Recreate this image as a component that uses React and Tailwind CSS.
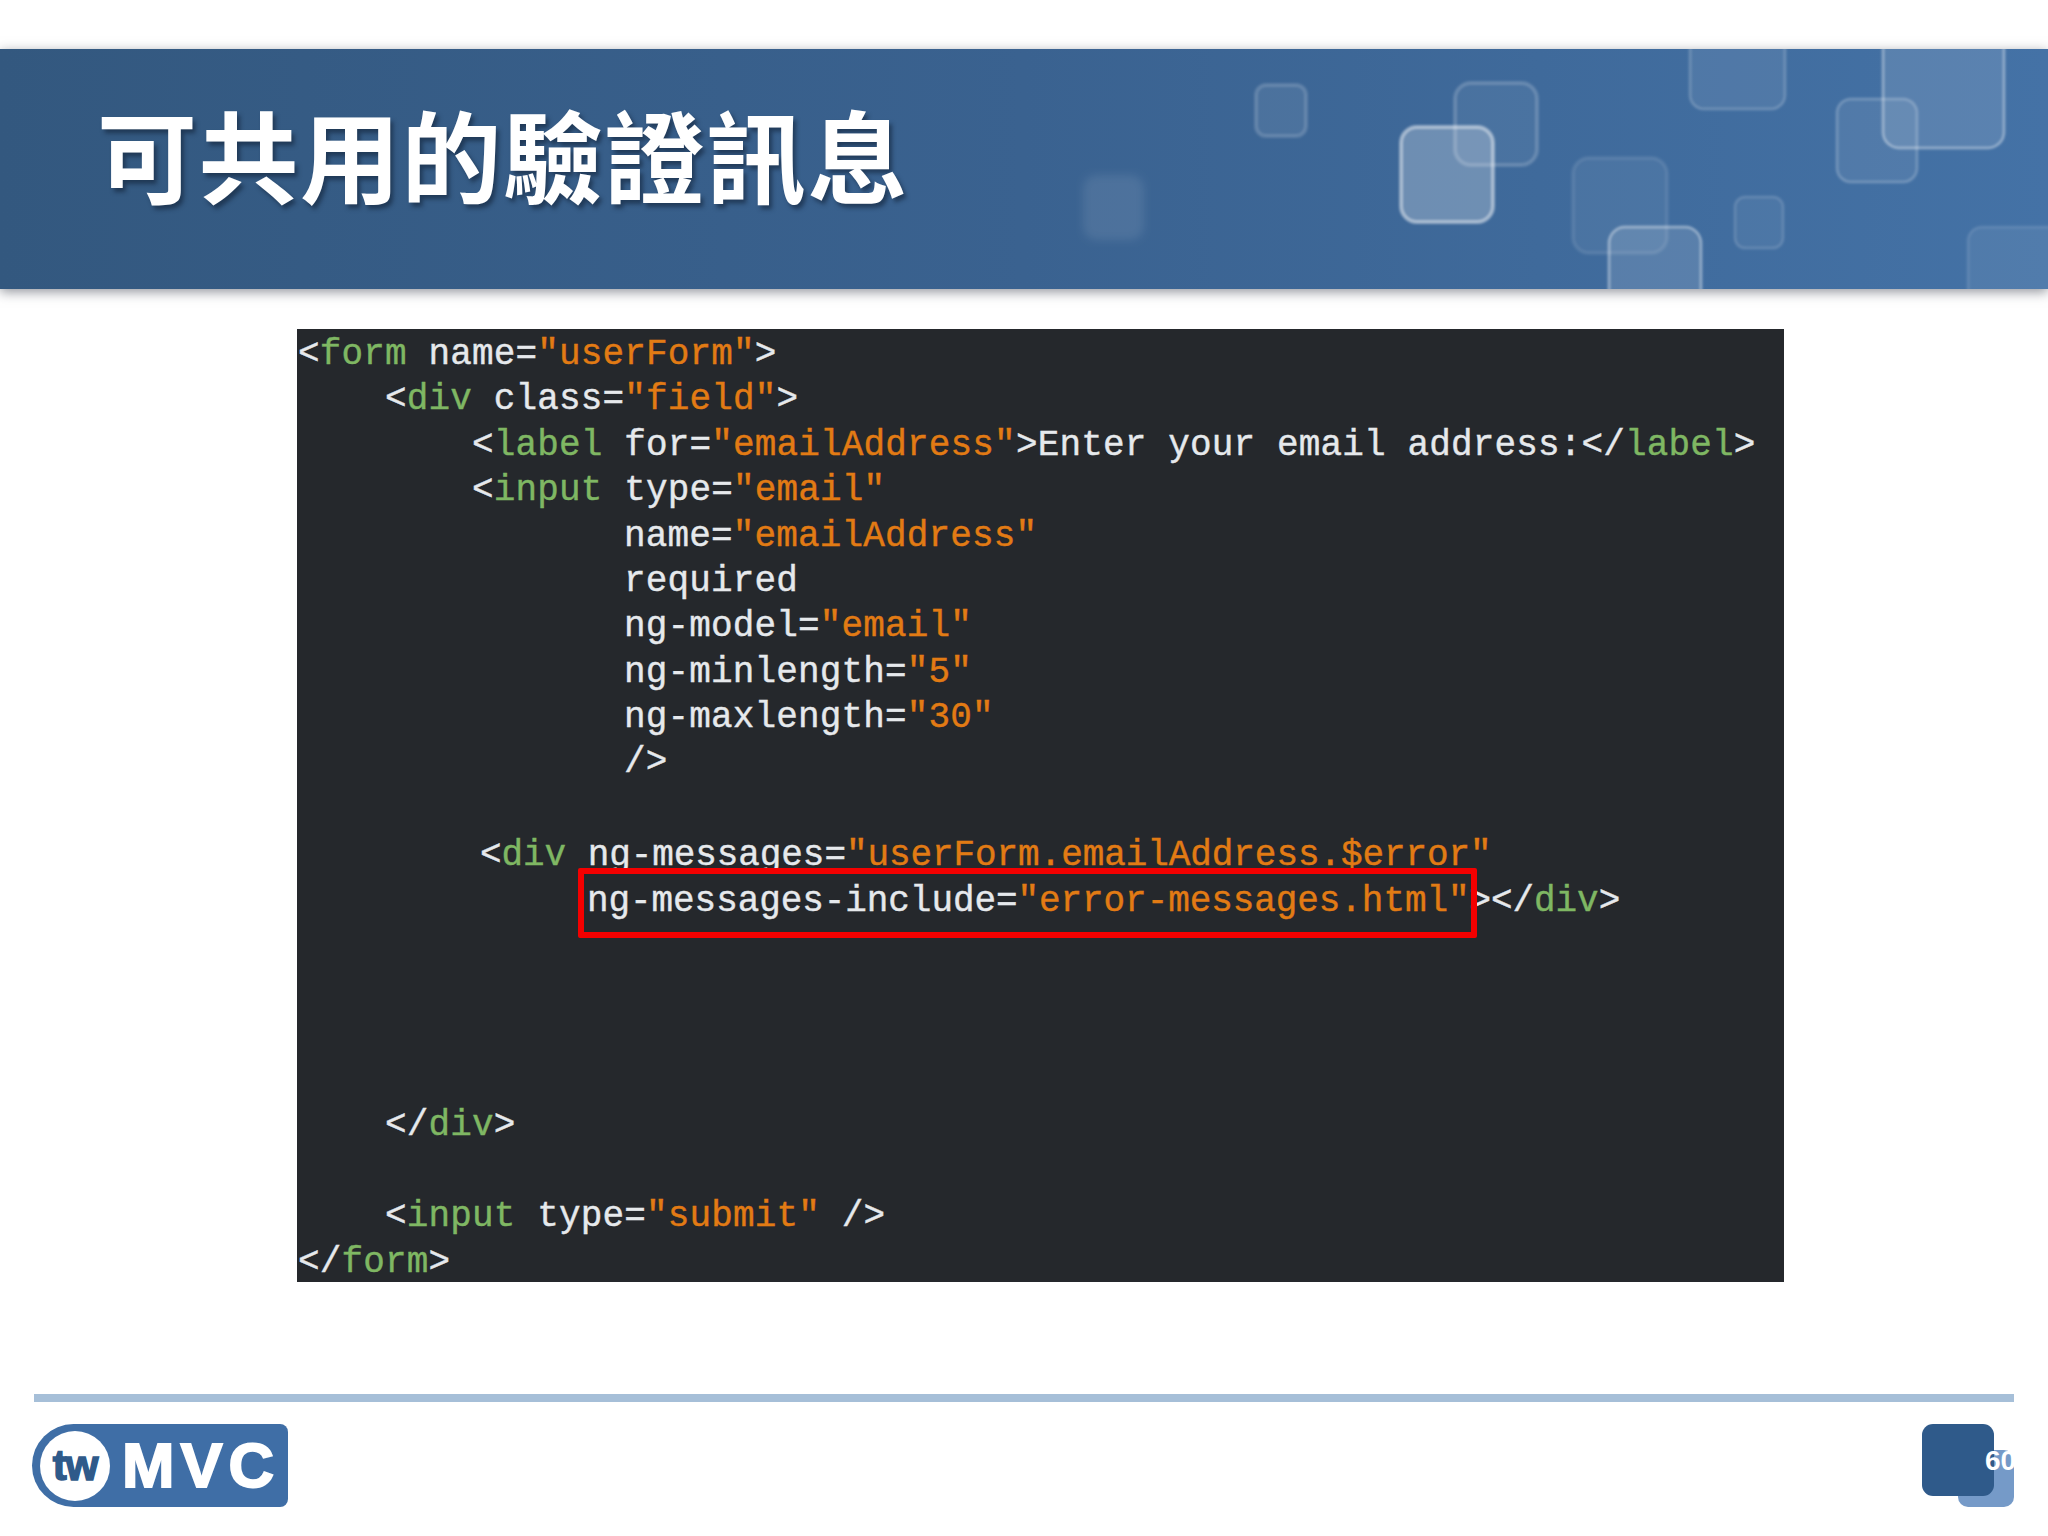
const COLORS = { p: "text-[#e6e9ec]", t: "text-[#7fb763]", s: "text-[#e27b14]" };

// [left padding + tracking, [color, text]...]
const LINES = [
  ["pl-[1px] tracking-[0.15px]", ["p", "<"], ["t", "form"], ["p", " name="], ["s", '"userForm"'], ["p", ">"]],
  ["pl-[88px] tracking-[0.15px]", ["p", "<"], ["t", "div"], ["p", " class="], ["s", '"field"'], ["p", ">"]],
  ["pl-[175px] tracking-[0.15px]", ["p", "<"], ["t", "label"], ["p", " for="], ["s", '"emailAddress"'], ["p", ">Enter your email address:</"], ["t", "label"], ["p", ">"]],
  ["pl-[175px] tracking-[0.15px]", ["p", "<"], ["t", "input"], ["p", " type="], ["s", '"email"']],
  ["pl-[327px] tracking-[0.15px]", ["p", "name="], ["s", '"emailAddress"']],
  ["pl-[327px] tracking-[0.15px]", ["p", "required"]],
  ["pl-[327px] tracking-[0.15px]", ["p", "ng-model="], ["s", '"email"']],
  ["pl-[327px] tracking-[0.15px]", ["p", "ng-minlength="], ["s", '"5"']],
  ["pl-[327px] tracking-[0.15px]", ["p", "ng-maxlength="], ["s", '"30"']],
  ["pl-[327px] tracking-[0.15px]", ["p", "/>"]],
  ["pl-0"],
  ["pl-[183px] pt-[2px] tracking-[-0.08px]", ["p", "<"], ["t", "div"], ["p", " ng-messages="], ["s", '"userForm.emailAddress.$error"']],
  ["pl-[290px] pt-[2px] tracking-[-0.08px]", ["p", "ng-messages-include="], ["s", '"error-messages.html"'], ["p", "></"], ["t", "div"], ["p", ">"]],
  ["pl-0"],
  ["pl-0"],
  ["pl-0"],
  ["pl-0"],
  ["pl-[88px] tracking-[0.15px]", ["p", "</"], ["t", "div"], ["p", ">"]],
  ["pl-0"],
  ["pl-[88px] tracking-[0.15px]", ["p", "<"], ["t", "input"], ["p", " type="], ["s", '"submit"'], ["p", " />"]],
  ["pl-[1px] tracking-[0.15px]", ["p", "</"], ["t", "form"], ["p", ">"]],
];

// banner decoration, page coordinates
const BOXES = [
  { x: 1256, y: 85, w: 50, h: 51, r: 10, f: 0.08, s: 0.16, sw: 4 },
  { x: 1455, y: 83, w: 82, h: 82, r: 16, f: 0.06, s: 0.18, sw: 4 },
  { x: 1401, y: 127, w: 92, h: 95, r: 16, f: 0.25, s: 0.45, sw: 4 },
  { x: 1690, y: 30, w: 95, h: 79, r: 14, f: 0.08, s: 0.18, sw: 3 },
  { x: 1883, y: 30, w: 121, h: 118, r: 16, f: 0.12, s: 0.34, sw: 3 },
  { x: 1837, y: 99, w: 80, h: 83, r: 14, f: 0.08, s: 0.2, sw: 3 },
  { x: 1573, y: 158, w: 94, h: 95, r: 16, f: 0.06, s: 0.09, sw: 4 },
  { x: 1609, y: 227, w: 92, h: 80, r: 16, f: 0.13, s: 0.36, sw: 3 },
  { x: 1735, y: 197, w: 48, h: 51, r: 10, f: 0.06, s: 0.14, sw: 3 },
  { x: 1968, y: 227, w: 100, h: 80, r: 14, f: 0.07, s: 0.1, sw: 3 },
  { x: 1083, y: 175, w: 61, h: 65, r: 14, f: 0.09, s: 0, sw: 0, blur: true },
];

function Banner() {
  return (
    <div className="relative h-[240px] overflow-hidden bg-gradient-to-r from-[#33587f] via-[#3a6290] to-[#4472a6] flex items-center pb-[32px] pl-[97px]">
      <svg className="absolute left-0 top-0" width="2048" height="240" viewBox="0 49 2048 240">
        <defs>
          <filter id="soft"><feGaussianBlur stdDeviation="4" /></filter>
          <filter id="softer"><feGaussianBlur stdDeviation="1.2" /></filter>
        </defs>
        {BOXES.map((b, i) => (
          <rect key={i} x={b.x} y={b.y} width={b.w} height={b.h} rx={b.r} fill="#fff" fillOpacity={b.f}
            stroke="#fff" strokeOpacity={b.s} strokeWidth={b.sw} filter={b.blur ? "url(#soft)" : "url(#softer)"} />
        ))}
      </svg>
      <h1 className="relative font-['Noto_Sans_CJK_TC',sans-serif] font-bold text-white text-[100px] leading-none tracking-[1.5px] [text-shadow:3px_4px_4px_rgba(15,30,50,0.55)]">
        可共用的驗證訊息
      </h1>
    </div>
  );
}

function CodeBlock() {
  return (
    <div className="relative w-[1487px] h-[953px] pt-[3px] bg-[#25282c] font-['Liberation_Mono',monospace] text-[36px] leading-[45.38px] whitespace-pre [-webkit-text-stroke:0.4px]">
      {LINES.map(([pad, ...tokens], i) => (
        <div key={i} className={`h-[45.38px] ${pad}`}>
          {tokens.map(([c, text], j) => <span key={j} className={COLORS[c]}>{text}</span>)}
        </div>
      ))}
      <div className="absolute left-[281px] top-[539px] w-[899px] h-[70px] border-[6px] border-[#f40000] rounded-[2px]" />
    </div>
  );
}

function Logo() {
  return (
    <div className="relative ml-[32px] w-[256px] h-[83px] bg-[#3f6ea6] rounded-l-[42px] rounded-r-[8px] flex items-center">
      <div className="ml-[8px] w-[70px] h-[70px] rounded-full bg-white flex items-center justify-center font-['Liberation_Sans',sans-serif] font-bold text-[#2f5a8a] text-[42px] tracking-[-1px] [-webkit-text-stroke:1.5px_#2f5a8a]">
        tw
      </div>
      <span className="ml-[12px] font-['Liberation_Sans',sans-serif] font-bold text-white text-[63px] leading-none tracking-[6px] [-webkit-text-stroke:2px_#fff]">MVC</span>
    </div>
  );
}

function PageNumber() {
  return (
    <div className="relative ml-auto mr-[34px] w-[92px] h-[83px]">
      <div className="absolute right-0 bottom-0 w-[56px] h-[57px] bg-[#759ac8] rounded-[10px]" />
      <div className="absolute left-0 top-0 w-[72px] h-[72px] bg-[#2f5a8a] rounded-[11px]" />
      <span className="absolute left-[63px] top-[19px] font-['Liberation_Sans',sans-serif] font-bold text-white text-[28px] leading-[36px]">60</span>
    </div>
  );
}

export default function App() {
  return (
    <div className="w-[2048px] h-[1536px] bg-white pt-[49px] overflow-hidden">
      <div className="shadow-[0_3px_11px_rgba(40,45,60,0.5)]">
        <Banner />
      </div>
      <div className="mt-[40px] ml-[297px]">
        <CodeBlock />
      </div>
      <div className="mt-[112px] ml-[34px] w-[1980px] h-[8px] bg-[#a6bfd8]" />
      <div className="mt-[22px] flex">
        <Logo />
        <PageNumber />
      </div>
    </div>
  );
}
